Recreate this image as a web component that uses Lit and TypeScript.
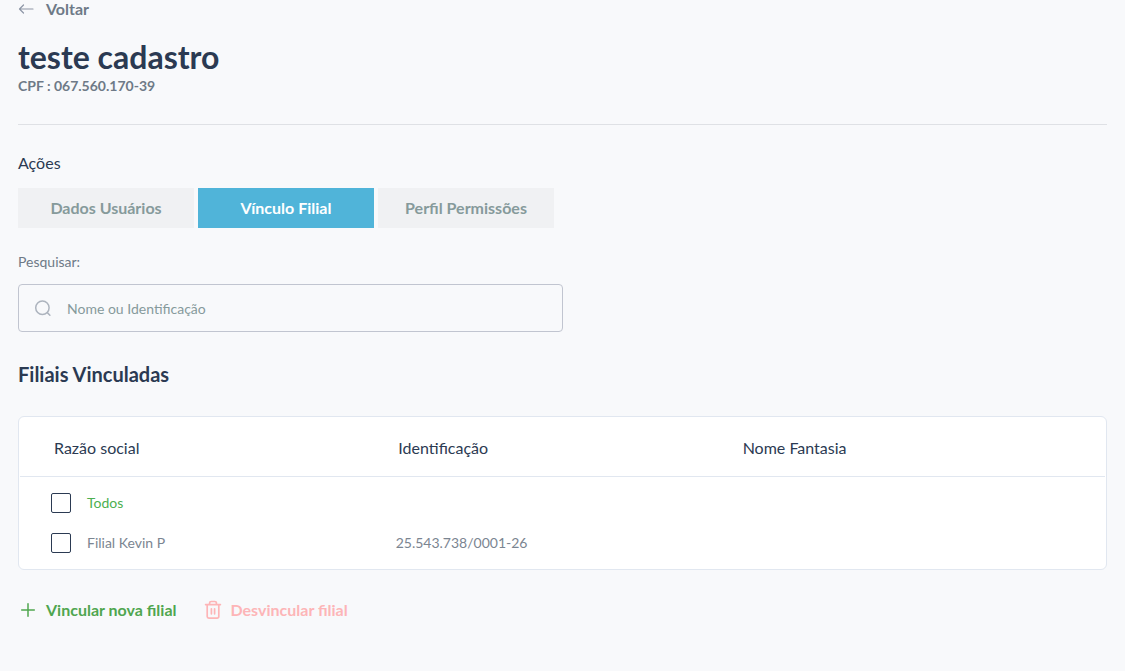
import { LitElement, html, css } from "lit";
import { customElement, state } from "lit/decorators.js";

interface Branch {
  name: string;
  document: string;
  tradeName: string;
}

@customElement("app-root")
export class AppRoot extends LitElement {
  @state() private tab = 1;
  @state() private selected: boolean[] = [false];

  private tabs = ["Dados Usuários", "Vínculo Filial", "Perfil Permissões"];
  private branches: Branch[] = [
    { name: "Filial Kevin P", document: "25.543.738/0001-26", tradeName: "" },
  ];

  static styles = css`
    :host {
      display: block;
      box-sizing: border-box;
      min-height: 100vh;
      padding: 0 18px 24px;
      background: #f8f9fb;
      color: #2b3a52;
      font-family: Lato, "Liberation Sans", sans-serif;
      font-size: 16px;
      line-height: 20px;
    }
    * {
      box-sizing: border-box;
    }
    button,
    input {
      font: inherit;
      color: inherit;
    }
    button {
      border: 0;
      padding: 0;
      background: none;
      cursor: pointer;
    }
    svg {
      display: block;
      flex: none;
      fill: none;
      stroke: currentColor;
    }
    .back {
      display: flex;
      width: fit-content;
      align-items: center;
      gap: 12px;
      color: #6e7a87;
      font-weight: 700;
      line-height: 18px;
      text-decoration: none;
    }
    .back svg {
      color: #8d96a5;
    }
    .header {
      padding: 18px 0 30px;
      border-bottom: 1px solid #dfe1e5;
    }
    h1 {
      margin: 0;
      font-size: 32px;
      line-height: 42px;
      font-weight: 700;
    }
    .cpf {
      margin: 0;
      color: #6e7a87;
      font-size: 14px;
      line-height: 16px;
      font-weight: 700;
    }
    .section-label {
      margin: 28px 0 15px;
    }
    .tabs {
      display: flex;
      flex-wrap: wrap;
      gap: 4px;
    }
    .tab {
      width: 176px;
      height: 40px;
      background: #f0f1f3;
      color: #869a9b;
      font-weight: 700;
    }
    .tab.active {
      background: #50b4d9;
      color: #fff;
    }
    .search-label {
      display: block;
      margin: 24px 0 12px;
      color: #6e7a87;
      font-size: 14px;
    }
    .search {
      display: flex;
      align-items: center;
      gap: 14px;
      width: 50%;
      height: 48px;
      padding: 2px 14px 0;
      border: 1px solid #c1c5d0;
      border-radius: 4px;
    }
    .search svg {
      color: #adb4be;
    }
    .search input {
      flex: 1;
      min-width: 0;
      padding: 0;
      border: 0;
      outline: 0;
      background: none;
      font-size: 14px;
    }
    .search input::placeholder {
      color: #869a9b;
      opacity: 1;
    }
    h2 {
      margin: 30px 0;
      font-size: 20px;
      line-height: 24px;
      font-weight: 700;
    }
    .card {
      padding: 0 1px;
      border: 1px solid #e1e7f0;
      border-radius: 6px;
      background: #fff;
    }
    table,
    thead {
      display: block;
    }
    tbody {
      display: block;
      padding: 6px 0;
    }
    tr {
      display: grid;
      grid-template-columns: repeat(3, 1fr);
      align-items: center;
      padding: 0 20px 0 31px;
      height: 40px;
      color: #7b8591;
      font-size: 14px;
    }
    thead tr {
      height: 60px;
      padding: 2px 18px 0 34px;
      border-bottom: 1px solid #e1e7f0;
      color: #2b3a52;
      font-size: 16px;
    }
    th,
    td {
      padding: 0;
      text-align: left;
      font-weight: 400;
    }
    .check {
      display: inline-flex;
      align-items: center;
      gap: 16px;
      vertical-align: top;
      cursor: pointer;
    }
    .check input {
      appearance: none;
      width: 20px;
      height: 20px;
      margin: 0;
      border: 1px solid #2b3a52;
      border-radius: 2px;
      background: #fff;
    }
    .check input:checked {
      background: #50b4d9;
    }
    .all {
      color: #4caf50;
    }
    .actions {
      display: flex;
      flex-wrap: wrap;
      gap: 26px;
      margin-top: 30px;
    }
    .action {
      display: inline-flex;
      align-items: center;
      gap: 8px;
      color: #4fa64f;
      font-weight: 700;
    }
    .action:disabled {
      color: #fdb5b7;
      cursor: default;
    }
  `;

  private toggleAll(e: Event) {
    const on = (e.target as HTMLInputElement).checked;
    this.selected = this.branches.map(() => on);
  }

  private toggle(index: number) {
    this.selected = this.selected.map((v, i) => (i === index ? !v : v));
  }

  render() {
    return html`
      <a class="back" href="#">
        <svg width="16" height="18" viewBox="0 0 16 18" stroke-width="1.2" stroke-linecap="round" stroke-linejoin="round">
          <path d="M15 9H1.5M5.5 5 1.5 9l4 4" />
        </svg>
        Voltar
      </a>
      <header class="header">
        <h1>teste cadastro</h1>
        <p class="cpf">CPF : 067.560.170-39</p>
      </header>

      <p class="section-label">Ações</p>
      <nav class="tabs">
        ${this.tabs.map(
          (label, i) => html`<button
            class="tab ${i === this.tab ? "active" : ""}"
            @click=${() => (this.tab = i)}
          >${label}</button>`
        )}
      </nav>

      <label class="search-label" for="search">Pesquisar:</label>
      <div class="search">
        <svg width="20" height="20" viewBox="0 0 20 20" stroke-width="1.5" stroke-linecap="round">
          <circle cx="9.4" cy="8.7" r="6.7" />
          <path d="m14.3 13.6 2.6 2.6" />
        </svg>
        <input id="search" type="text" placeholder="Nome ou Identificação" />
      </div>

      <h2>Filiais Vinculadas</h2>
      <div class="card">
        <table role="table">
          <thead role="rowgroup">
            <tr role="row">
              <th role="columnheader">Razão social</th>
              <th role="columnheader">Identificação</th>
              <th role="columnheader">Nome Fantasia</th>
            </tr>
          </thead>
          <tbody role="rowgroup">
            <tr role="row">
              <td role="cell">
                <label class="check all">
                  <input type="checkbox" .checked=${this.selected.every(Boolean)} @change=${this.toggleAll} />
                  Todos
                </label>
              </td>
            </tr>
            ${this.branches.map(
              (b, i) => html`<tr role="row">
                <td role="cell">
                  <label class="check">
                    <input type="checkbox" .checked=${this.selected[i]} @change=${() => this.toggle(i)} />
                    ${b.name}
                  </label>
                </td>
                <td role="cell">${b.document}</td>
                <td role="cell">${b.tradeName}</td>
              </tr>`
            )}
          </tbody>
        </table>
      </div>

      <div class="actions">
        <button class="action">
          <svg width="20" height="20" viewBox="0 0 20 20" stroke-width="1.5" stroke-linecap="round">
            <path d="M10 3.7v12.6M3.7 10h12.6" />
          </svg>
          Vincular nova filial
        </button>
        <button class="action" ?disabled=${!this.selected.some(Boolean)}>
          <svg width="20" height="20" viewBox="0 0 20 20" stroke-width="1.7" stroke-linecap="round" stroke-linejoin="round">
            <path d="M2.6 4.6h14.8M4.2 4.6v12a1.6 1.6 0 0 0 1.6 1.6h8.4a1.6 1.6 0 0 0 1.6-1.6v-12M6.6 4.4V3.1a1.6 1.6 0 0 1 1.6-1.6h3.6a1.6 1.6 0 0 1 1.6 1.6v1.3M8.4 8.8v5M11.6 8.8v5" />
          </svg>
          Desvincular filial
        </button>
      </div>
    `;
  }
}
